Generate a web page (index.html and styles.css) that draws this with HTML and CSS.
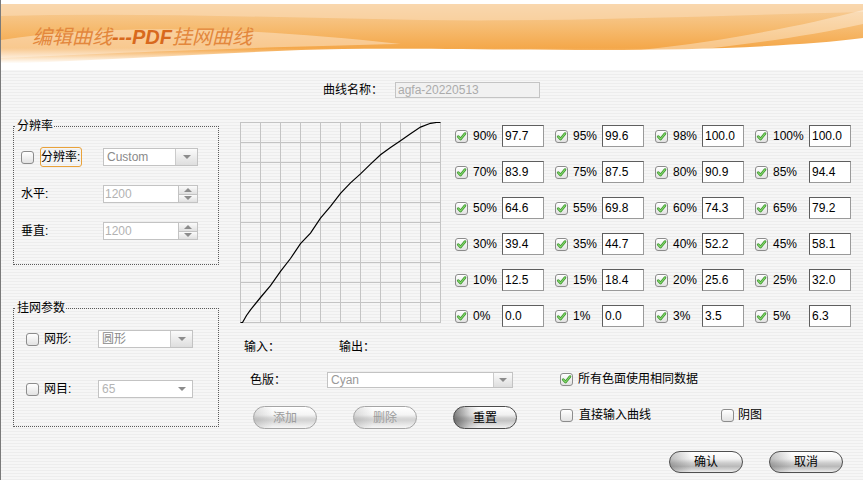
FILE: index.html
```html
<!DOCTYPE html>
<html lang="zh-CN">
<head>
<meta charset="utf-8">
<title>编辑曲线</title>
<link rel="stylesheet" href="styles.css">
</head>
<body>
<div class="window">
  <header class="banner">
    <svg class="banner-bg" width="862" height="70" viewBox="0 0 862 70" preserveAspectRatio="none">
      <defs>
        <linearGradient id="orange" x1="0" y1="0" x2="0" y2="1">
          <stop offset="0" stop-color="#f7cf9d"/>
          <stop offset="0.4" stop-color="#f6bb70"/>
          <stop offset="0.78" stop-color="#f4a545"/>
          <stop offset="1" stop-color="#f6b666"/>
        </linearGradient>
        <linearGradient id="fade" x1="0" y1="0" x2="0" y2="1">
          <stop offset="0" stop-color="#ffffff" stop-opacity="0"/>
          <stop offset="0.7" stop-color="#ffffff" stop-opacity="1"/>
          <stop offset="1" stop-color="#ffffff" stop-opacity="1"/>
        </linearGradient>
      </defs>
      <rect x="0" y="0" width="862" height="70" fill="#ffffff"/>
      <path d="M0,4 H862 V38 C800,46 700,50 600,50 C480,50 380,47 300,50 C200,54 100,60 0,64 Z" fill="url(#orange)"/>
      <path d="M0,4 H862 V12 C700,16 560,22 420,20 C280,18 140,12 0,16 Z" fill="#fbe0bf" opacity="0.5"/>
      <path d="M0,40 C100,24 240,26 400,44 C300,46 180,50 0,58 Z" fill="#fce4c8" opacity="0.55"/>
      <path d="M640,50 C730,40 800,26 862,10 V24 C800,38 720,48 660,53 Z" fill="#ffffff" opacity="0.35"/>
      <rect x="0" y="48" width="862" height="22" fill="url(#fade)"/>
    </svg>
    <h1 class="title">编辑曲线<b>---PDF</b>挂网曲线</h1>
  </header>

  <div class="name-row">
    <span class="name-label">曲线名称：</span>
    <span class="name-input">agfa-20220513</span>
  </div>

  <div class="body">
    <div class="left">
      <fieldset class="group g1">
        <legend>分辨率</legend>
        <div class="g1-rows">
          <div class="g1-label"><span class="cb"></span><span class="focus-label">分辨率:</span></div>
          <div class="select"><span class="sel-text">Custom</span><span class="sel-btn"><i class="tri"></i></span></div>
          <div class="g1-label">水平:</div>
          <div class="spin"><span class="spin-text">1200</span><span class="spin-btns"><span class="spin-half"><i class="tri-s up"></i></span><span class="spin-half"><i class="tri-s"></i></span></span></div>
          <div class="g1-label">垂直:</div>
          <div class="spin"><span class="spin-text">1200</span><span class="spin-btns"><span class="spin-half"><i class="tri-s up"></i></span><span class="spin-half"><i class="tri-s"></i></span></span></div>
        </div>
      </fieldset>

      <fieldset class="group g2">
        <legend>挂网参数</legend>
        <div class="g2-rows">
          <div class="g2-label"><span class="cb"></span><span class="lbl">网形:</span></div>
          <div class="select"><span class="sel-text cjk">圆形</span><span class="sel-btn"><i class="tri"></i></span></div>
          <div class="g2-label"><span class="cb"></span><span class="lbl">网目:</span></div>
          <div class="select"><span class="sel-text light">65</span><span class="sel-btn plain"><i class="tri"></i></span></div>
        </div>
      </fieldset>
    </div>

    <div class="main">
      <div class="top">
        <svg class="curve" width="201" height="201" viewBox="0 0 201 201">
          <path d="M0.5,0V201M20.5,0V201M40.5,0V201M60.5,0V201M80.5,0V201M100.5,0V201M120.5,0V201M140.5,0V201M160.5,0V201M180.5,0V201M200.5,0V201M0,0.5H201M0,20.5H201M0,40.5H201M0,60.5H201M0,80.5H201M0,100.5H201M0,120.5H201M0,140.5H201M0,160.5H201M0,180.5H201M0,200.5H201" stroke="#c4c4c4" stroke-width="1" fill="none" shape-rendering="crispEdges"/>
          <polyline points="0.5,200.5 2.5,200.5 6.5,193.5 10.5,187.9 20.5,175.5 30.5,163.7 40.5,149.3 50.5,136.5 60.5,121.7 70.5,111.1 80.5,96.1 90.5,84.3 100.5,71.3 110.5,60.9 120.5,51.9 130.5,42.1 140.5,32.7 150.5,25.5 160.5,18.7 170.5,11.7 180.5,5.1 190.5,1.3 196.5,0.5 200.5,0.5" fill="none" stroke="#000" stroke-width="1.2"/>
        </svg>

        <div class="points">
          <div class="pt"><span class="cb on"><svg width="11" height="11" viewBox="0 0 11 11"><path d="M2.2 5.6 L4.6 8 L9 2.6" class="ck-a"/><path d="M2.2 5.6 L4.6 8 L9 2.6" class="ck-b"/></svg></span><span class="pct">90%</span><span class="val">97.7</span></div>
          <div class="pt"><span class="cb on"><svg width="11" height="11" viewBox="0 0 11 11"><path d="M2.2 5.6 L4.6 8 L9 2.6" class="ck-a"/><path d="M2.2 5.6 L4.6 8 L9 2.6" class="ck-b"/></svg></span><span class="pct">95%</span><span class="val">99.6</span></div>
          <div class="pt"><span class="cb on"><svg width="11" height="11" viewBox="0 0 11 11"><path d="M2.2 5.6 L4.6 8 L9 2.6" class="ck-a"/><path d="M2.2 5.6 L4.6 8 L9 2.6" class="ck-b"/></svg></span><span class="pct">98%</span><span class="val">100.0</span></div>
          <div class="pt c4"><span class="cb on"><svg width="11" height="11" viewBox="0 0 11 11"><path d="M2.2 5.6 L4.6 8 L9 2.6" class="ck-a"/><path d="M2.2 5.6 L4.6 8 L9 2.6" class="ck-b"/></svg></span><span class="pct">100%</span><span class="val">100.0</span></div>

          <div class="pt"><span class="cb on"><svg width="11" height="11" viewBox="0 0 11 11"><path d="M2.2 5.6 L4.6 8 L9 2.6" class="ck-a"/><path d="M2.2 5.6 L4.6 8 L9 2.6" class="ck-b"/></svg></span><span class="pct">70%</span><span class="val">83.9</span></div>
          <div class="pt"><span class="cb on"><svg width="11" height="11" viewBox="0 0 11 11"><path d="M2.2 5.6 L4.6 8 L9 2.6" class="ck-a"/><path d="M2.2 5.6 L4.6 8 L9 2.6" class="ck-b"/></svg></span><span class="pct">75%</span><span class="val">87.5</span></div>
          <div class="pt"><span class="cb on"><svg width="11" height="11" viewBox="0 0 11 11"><path d="M2.2 5.6 L4.6 8 L9 2.6" class="ck-a"/><path d="M2.2 5.6 L4.6 8 L9 2.6" class="ck-b"/></svg></span><span class="pct">80%</span><span class="val">90.9</span></div>
          <div class="pt c4"><span class="cb on"><svg width="11" height="11" viewBox="0 0 11 11"><path d="M2.2 5.6 L4.6 8 L9 2.6" class="ck-a"/><path d="M2.2 5.6 L4.6 8 L9 2.6" class="ck-b"/></svg></span><span class="pct">85%</span><span class="val">94.4</span></div>

          <div class="pt"><span class="cb on"><svg width="11" height="11" viewBox="0 0 11 11"><path d="M2.2 5.6 L4.6 8 L9 2.6" class="ck-a"/><path d="M2.2 5.6 L4.6 8 L9 2.6" class="ck-b"/></svg></span><span class="pct">50%</span><span class="val">64.6</span></div>
          <div class="pt"><span class="cb on"><svg width="11" height="11" viewBox="0 0 11 11"><path d="M2.2 5.6 L4.6 8 L9 2.6" class="ck-a"/><path d="M2.2 5.6 L4.6 8 L9 2.6" class="ck-b"/></svg></span><span class="pct">55%</span><span class="val">69.8</span></div>
          <div class="pt"><span class="cb on"><svg width="11" height="11" viewBox="0 0 11 11"><path d="M2.2 5.6 L4.6 8 L9 2.6" class="ck-a"/><path d="M2.2 5.6 L4.6 8 L9 2.6" class="ck-b"/></svg></span><span class="pct">60%</span><span class="val">74.3</span></div>
          <div class="pt c4"><span class="cb on"><svg width="11" height="11" viewBox="0 0 11 11"><path d="M2.2 5.6 L4.6 8 L9 2.6" class="ck-a"/><path d="M2.2 5.6 L4.6 8 L9 2.6" class="ck-b"/></svg></span><span class="pct">65%</span><span class="val">79.2</span></div>

          <div class="pt"><span class="cb on"><svg width="11" height="11" viewBox="0 0 11 11"><path d="M2.2 5.6 L4.6 8 L9 2.6" class="ck-a"/><path d="M2.2 5.6 L4.6 8 L9 2.6" class="ck-b"/></svg></span><span class="pct">30%</span><span class="val">39.4</span></div>
          <div class="pt"><span class="cb on"><svg width="11" height="11" viewBox="0 0 11 11"><path d="M2.2 5.6 L4.6 8 L9 2.6" class="ck-a"/><path d="M2.2 5.6 L4.6 8 L9 2.6" class="ck-b"/></svg></span><span class="pct">35%</span><span class="val">44.7</span></div>
          <div class="pt"><span class="cb on"><svg width="11" height="11" viewBox="0 0 11 11"><path d="M2.2 5.6 L4.6 8 L9 2.6" class="ck-a"/><path d="M2.2 5.6 L4.6 8 L9 2.6" class="ck-b"/></svg></span><span class="pct">40%</span><span class="val">52.2</span></div>
          <div class="pt c4"><span class="cb on"><svg width="11" height="11" viewBox="0 0 11 11"><path d="M2.2 5.6 L4.6 8 L9 2.6" class="ck-a"/><path d="M2.2 5.6 L4.6 8 L9 2.6" class="ck-b"/></svg></span><span class="pct">45%</span><span class="val">58.1</span></div>

          <div class="pt"><span class="cb on"><svg width="11" height="11" viewBox="0 0 11 11"><path d="M2.2 5.6 L4.6 8 L9 2.6" class="ck-a"/><path d="M2.2 5.6 L4.6 8 L9 2.6" class="ck-b"/></svg></span><span class="pct">10%</span><span class="val">12.5</span></div>
          <div class="pt"><span class="cb on"><svg width="11" height="11" viewBox="0 0 11 11"><path d="M2.2 5.6 L4.6 8 L9 2.6" class="ck-a"/><path d="M2.2 5.6 L4.6 8 L9 2.6" class="ck-b"/></svg></span><span class="pct">15%</span><span class="val">18.4</span></div>
          <div class="pt"><span class="cb on"><svg width="11" height="11" viewBox="0 0 11 11"><path d="M2.2 5.6 L4.6 8 L9 2.6" class="ck-a"/><path d="M2.2 5.6 L4.6 8 L9 2.6" class="ck-b"/></svg></span><span class="pct">20%</span><span class="val">25.6</span></div>
          <div class="pt c4"><span class="cb on"><svg width="11" height="11" viewBox="0 0 11 11"><path d="M2.2 5.6 L4.6 8 L9 2.6" class="ck-a"/><path d="M2.2 5.6 L4.6 8 L9 2.6" class="ck-b"/></svg></span><span class="pct">25%</span><span class="val">32.0</span></div>

          <div class="pt"><span class="cb on"><svg width="11" height="11" viewBox="0 0 11 11"><path d="M2.2 5.6 L4.6 8 L9 2.6" class="ck-a"/><path d="M2.2 5.6 L4.6 8 L9 2.6" class="ck-b"/></svg></span><span class="pct">0%</span><span class="val">0.0</span></div>
          <div class="pt"><span class="cb on"><svg width="11" height="11" viewBox="0 0 11 11"><path d="M2.2 5.6 L4.6 8 L9 2.6" class="ck-a"/><path d="M2.2 5.6 L4.6 8 L9 2.6" class="ck-b"/></svg></span><span class="pct">1%</span><span class="val">0.0</span></div>
          <div class="pt"><span class="cb on"><svg width="11" height="11" viewBox="0 0 11 11"><path d="M2.2 5.6 L4.6 8 L9 2.6" class="ck-a"/><path d="M2.2 5.6 L4.6 8 L9 2.6" class="ck-b"/></svg></span><span class="pct">3%</span><span class="val">3.5</span></div>
          <div class="pt c4"><span class="cb on"><svg width="11" height="11" viewBox="0 0 11 11"><path d="M2.2 5.6 L4.6 8 L9 2.6" class="ck-a"/><path d="M2.2 5.6 L4.6 8 L9 2.6" class="ck-b"/></svg></span><span class="pct">5%</span><span class="val">6.3</span></div>
        </div>
      </div>

      <div class="bottom">
        <div class="io"><span class="io-in">输入：</span><span>输出：</span></div>
        <div></div>
        <div class="plate"><span class="plate-label">色版：</span><div class="select cyan"><span class="sel-text">Cyan</span><span class="sel-btn"><i class="tri"></i></span></div></div>
        <div class="opt"><span class="cb on"><svg width="11" height="11" viewBox="0 0 11 11"><path d="M2.2 5.6 L4.6 8 L9 2.6" class="ck-a"/><path d="M2.2 5.6 L4.6 8 L9 2.6" class="ck-b"/></svg></span><span class="opt-text">所有色面使用相同数据</span></div>
        <div class="btns"><span class="pill off">添加</span><span class="pill off">删除</span><span class="pill focus">重置</span></div>
        <div class="opts2"><div class="opt direct"><span class="cb"></span><span class="opt-text">直接输入曲线</span></div><div class="opt"><span class="cb"></span><span class="opt-text">阴图</span></div></div>
      </div>
    </div>
  </div>

  <div class="footer">
    <span class="pill big">确认</span>
    <span class="pill big">取消</span>
  </div>
</div>
</body>
</html>
```

FILE: styles.css
```css
html, body {
  margin: 0;
  padding: 0;
}
body {
  width: 863px;
  height: 480px;
  overflow: hidden;
  font-family: "Liberation Sans", "Noto Sans CJK SC", sans-serif;
  font-size: 12px;
  color: #000;
}
.window {
  box-sizing: border-box;
  width: 863px;
  height: 480px;
  border-left: 1px solid #7a7a7a;
  background: repeating-linear-gradient(180deg, #f6f6f6 0px, #f6f6f6 2px, #ededed 2px, #ededed 3px);
  overflow: hidden;
}

/* banner */
.banner {
  position: relative;
  height: 70px;
}
.banner-bg {
  position: absolute;
  left: 0;
  top: 0;
  display: block;
}
.title {
  position: relative;
  margin: 0;
  padding: 24px 0 0 31px;
  font-family: "Noto Sans CJK SC", sans-serif;
  font-size: 20px;
  line-height: 24px;
  font-weight: normal;
  font-style: italic;
  color: #e3873c;
  letter-spacing: 0;
}
.title b {
  font-family: "Liberation Sans", sans-serif;
  font-weight: bold;
  color: #d8691d;
}

/* name row */
.name-row {
  display: flex;
  align-items: center;
  height: 16px;
  margin-top: 12px;
  padding-left: 322px;
}
.name-label {
  width: 72px;
  line-height: 14px;
}
.name-input {
  box-sizing: border-box;
  width: 145px;
  height: 16px;
  border: 1px solid #c4c4c4;
  background: #f1f1f1;
  color: #ababab;
  padding-left: 2px;
  line-height: 14px;
}

/* body */
.body {
  display: flex;
}
.left {
  width: 206px;
  padding-left: 12px;
}
.group {
  box-sizing: border-box;
  width: 206px;
  margin: 0;
  padding: 0;
  border: 1px dotted #5a5a5a;
  min-width: 0;
}
.group legend {
  margin-left: 2px;
  padding: 0 1px;
  line-height: 14px;
  font-size: 12px;
}
.g1 {
  margin-top: 21px;
}
.g1-rows {
  display: grid;
  grid-template-columns: 82px 95px;
  grid-auto-rows: 18px;
  row-gap: 19px;
  padding: 15px 0 24px 7px;
  align-items: center;
}
.g1-label {
  display: flex;
  align-items: center;
  line-height: 14px;
  white-space: nowrap;
}
.focus-label {
  box-sizing: border-box;
  margin-left: 6px;
  height: 20px;
  line-height: 18px;
  padding: 0 1px 0 0;
  border: 1px solid #e9a23a;
  border-radius: 3px;
  white-space: nowrap;
}
.g2 {
  margin-top: 36px;
}
.g2-rows {
  display: grid;
  grid-template-columns: 72px 95px;
  grid-template-rows: 18px 18px;
  row-gap: 32px;
  padding: 15px 0 28px 12px;
  align-items: center;
}
.g2-label {
  display: flex;
  align-items: center;
}
.g2-label .lbl {
  margin-left: 5px;
  line-height: 14px;
}

/* checkbox */
.cb {
  box-sizing: border-box;
  flex: none;
  display: inline-flex;
  align-items: center;
  justify-content: center;
  width: 13px;
  height: 13px;
  border: 1px solid #8c8c8c;
  border-radius: 3px;
  background: linear-gradient(180deg, #ffffff, #e2e2e2);
}
.cb svg {
  display: block;
}
.ck-a {
  fill: none;
  stroke: #3b962d;
  stroke-width: 2.6;
  stroke-linecap: round;
  stroke-linejoin: round;
}
.ck-b {
  fill: none;
  stroke: #86d86c;
  stroke-width: 1.1;
  stroke-linecap: round;
  stroke-linejoin: round;
}

/* select / spin */
.select {
  box-sizing: border-box;
  display: flex;
  width: 95px;
  height: 18px;
  border: 1px solid #c3c3c3;
  background: #fff;
}
.sel-text {
  flex: 1;
  padding-left: 3px;
  line-height: 16px;
  color: #8a8a8a;
}
.sel-text.light {
  color: #b4b4b4;
}
.sel-btn {
  width: 21px;
  display: flex;
  align-items: center;
  justify-content: center;
  border-left: 1px solid #cbcbcb;
  background: linear-gradient(180deg, #fbfbfb, #dedede);
}
.sel-btn.plain {
  border-left: none;
  background: none;
}
.tri {
  width: 0;
  height: 0;
  border-left: 4px solid transparent;
  border-right: 4px solid transparent;
  border-top: 4px solid #8c8c8c;
}
.spin {
  box-sizing: border-box;
  display: flex;
  width: 95px;
  height: 18px;
  border: 1px solid #c3c3c3;
  background: #fff;
}
.spin-text {
  flex: 1;
  line-height: 16px;
  padding-left: 1px;
  color: #b2b2b2;
}
.spin-btns {
  width: 18px;
  display: flex;
  flex-direction: column;
  border-left: 1px solid #c3c3c3;
}
.spin-half {
  flex: 1;
  display: flex;
  align-items: center;
  justify-content: center;
  background: linear-gradient(180deg, #fbfbfb, #e0e0e0);
}
.spin-half + .spin-half {
  border-top: 1px solid #c3c3c3;
}
.tri-s {
  width: 0;
  height: 0;
  border-left: 4px solid transparent;
  border-right: 4px solid transparent;
  border-top: 4px solid #8c8c8c;
}
.tri-s.up {
  border-top: none;
  border-bottom: 4px solid #8c8c8c;
}

/* main */
.main {
  margin-left: 21px;
  padding-top: 24px;
}
.top {
  display: flex;
  align-items: flex-start;
  height: 201px;
}
.curve {
  display: block;
  flex: none;
}
.points {
  margin-left: 14px;
  margin-top: 3px;
  display: grid;
  grid-template-columns: 100px 100px 100px 96px;
  grid-auto-rows: 22px;
  row-gap: 14px;
}
.pt {
  display: flex;
  align-items: center;
}
.pt .cb {
  margin-right: 5px;
}
.pct {
  width: 29px;
  line-height: 14px;
}
.pt.c4 .pct {
  width: 36px;
}
.val {
  box-sizing: border-box;
  width: 42px;
  height: 22px;
  border: 1px solid #9a9a9a;
  border-top-color: #5e5e5e;
  border-left-color: #5e5e5e;
  background: #fff;
  padding-left: 2px;
  line-height: 20px;
}

/* bottom */
.bottom {
  display: grid;
  grid-template-columns: 320px 300px;
  grid-template-rows: 14px 16px 23px;
  row-gap: 18px;
  margin-top: 17px;
}
.io {
  display: flex;
  padding-left: 4px;
  line-height: 14px;
}
.io-in {
  width: 95px;
}
.plate {
  display: flex;
  align-items: center;
  padding-left: 10px;
}
.plate-label {
  width: 77px;
  line-height: 14px;
}
.select.cyan {
  width: 186px;
  height: 16px;
}
.select.cyan .sel-text {
  line-height: 14px;
  color: #999;
}
.select.cyan .sel-btn {
  width: 18px;
}
.opt {
  display: flex;
  align-items: center;
  height: 14px;
}
.opt .cb {
  margin-right: 5px;
}
.opt-text {
  line-height: 14px;
}
.opts2 {
  display: flex;
  align-items: flex-start;
  padding-top: 2px;
}
.opt.direct {
  width: 161px;
}
.opts2 .opt .cb {
  margin-right: 6px;
}
.opts2 .opt:last-child .cb {
  margin-right: 4px;
}
.btns {
  display: flex;
  gap: 36px;
  padding-left: 13px;
}

/* pill buttons */
.pill {
  box-sizing: border-box;
  display: flex;
  align-items: center;
  justify-content: center;
  width: 64px;
  height: 23px;
  border-radius: 12px;
  border: 1px solid #9a9a9a;
  background:
    linear-gradient(90deg, rgba(90, 90, 90, 0.18) 0%, rgba(90, 90, 90, 0) 30%),
    linear-gradient(180deg, #ffffff 0%, #f4f4f4 38%, #d9d9d9 52%, #d2d2d2 62%, #ececec 88%, #f7f7f7 100%);
  color: #000;
  line-height: 14px;
}
.pill.off {
  color: #9c9c9c;
  border-color: #a5a5a5;
}
.pill.focus {
  border-color: #4b4b4b;
  background:
    linear-gradient(90deg, rgba(50, 50, 50, 0.6) 0%, rgba(50, 50, 50, 0.15) 25%, rgba(50, 50, 50, 0) 40%),
    linear-gradient(180deg, #ffffff 0%, #f0f0f0 38%, #cfcfcf 52%, #c4c4c4 65%, #e4e4e4 90%, #f2f2f2 100%);
}
.pill.big {
  width: 74px;
  height: 22px;
  border-color: #4f4f4f;
  background:
    linear-gradient(90deg, rgba(60, 60, 60, 0.3) 0%, rgba(60, 60, 60, 0) 30%),
    linear-gradient(180deg, #ffffff 0%, #f3f3f3 35%, #cdcdcd 55%, #b9b9b9 72%, #dcdcdc 92%, #eeeeee 100%);
}

/* footer */
.footer {
  display: flex;
  justify-content: flex-end;
  gap: 26px;
  margin-top: 22px;
  padding-right: 20px;
}
```
